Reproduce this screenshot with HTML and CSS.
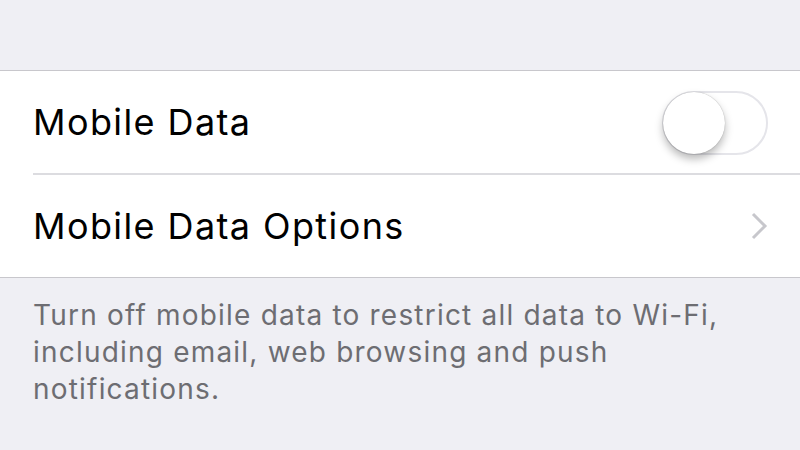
FILE: index.html
```html
<!DOCTYPE html>
<html lang="en">
<head>
  <meta charset="UTF-8" />
  <title>Mobile Data</title>
  <link rel="stylesheet" href="styles.css">
</head>
<body>
  <div class="grupo">
    <div class="linha">
      <span class="rotulo">Mobile Data</span>
      <div class="switch"><div class="knob"></div></div>
    </div>
    <div class="linha">
      <span class="rotulo">Mobile Data Options</span>
      <svg class="chevron" width="18" height="28" viewBox="0 0 18 28">
        <path d="M3 2 L15 14 L3 26" fill="none" stroke="#c7c7cc" stroke-width="3" />
      </svg>
    </div>
  </div>
  <p class="rodape">Turn off mobile data to restrict all data to Wi-Fi, including email, web browsing and push notifications.</p>
</body>
</html>
```

FILE: styles.css
```css
body {
  margin: 0;
  background-color: #efeff4;
  font-family: Inter, "Noto Sans", sans-serif;
  padding-top: 70px;
}

.grupo {
  background-color: #fff;
  border-top: 1px solid #c8c7cc;
  border-bottom: 1px solid #c8c7cc;
  padding-left: 33px;
}

.linha {
  display: flex;
  align-items: center;
  justify-content: space-between;
  height: 102px;
  padding-right: 32px;
}

.linha + .linha {
  border-top: 2px solid #dcdce0;
}

.rotulo {
  font-size: 36px;
  color: #000;
  letter-spacing: 1.4px;
}

.switch {
  width: 106px;
  height: 64px;
  border: 2px solid #e5e5ea;
  border-radius: 34px;
  box-sizing: border-box;
  position: relative;
  margin-top: 2px;
}

.knob {
  position: absolute;
  left: -1px;
  top: -1px;
  width: 62px;
  height: 62px;
  border-radius: 50%;
  background: #fff;
  box-shadow: 0 5px 9px rgba(0, 0, 0, 0.28), 0 0 1px rgba(0, 0, 0, 0.35);
}

.rodape {
  margin: 19px 50px 0 33px;
  font-size: 28px;
  line-height: 37px;
  letter-spacing: 1.2px;
  color: #6d6d72;
}
```
